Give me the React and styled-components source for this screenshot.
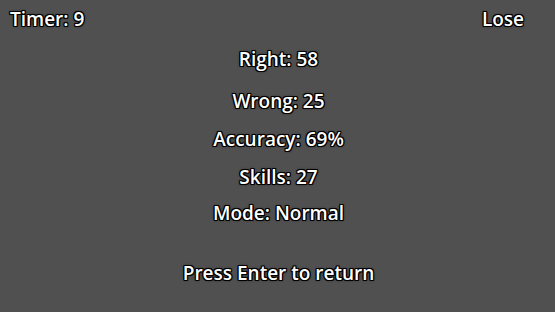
import React from "react";
import styled, { createGlobalStyle } from "styled-components";

const Global = createGlobalStyle`
  html, body {
    margin: 0;
    padding: 0;
    background: #505050;
  }
`;

const Screen = styled.div`
  width: 555px;
  height: 312px;
  background: #505050;
  color: #fff;
  font-family: "Open Sans", "DejaVu Sans", sans-serif;
  font-size: 19px;
  font-weight: 600;
  text-shadow: -1px -1px 0 #000, 1px -1px 0 #000, -1px 1px 0 #000,
    1px 1px 0 #000, 0 -1px 0 #000, 0 1px 0 #000, -1px 0 0 #000, 1px 0 0 #000,
    0 0 3px #000;
  overflow: hidden;
  display: flex;
  flex-direction: column;
`;

const TopBar = styled.div`
  display: flex;
  justify-content: space-between;
  padding: 6px 31px 0 10px;
  line-height: 26px;
`;

const Stats = styled.div`
  display: flex;
  flex-direction: column;
  align-items: center;
  margin-top: 14px;
  padding-left: 2px;
`;

const Line = styled.div`
  line-height: 26px;
  margin-top: ${({ gap }) => gap}px;
`;

const stats = [
  ["Right: 58", 0],
  ["Wrong: 25", 16],
  ["Accuracy: 69%", 12],
  ["Skills: 27", 12],
  ["Mode: Normal", 10],
  ["Press Enter to return", 34],
];

export default function App() {
  return (
    <>
      <Global />
      <Screen>
        <TopBar>
          <span>Timer: 9</span>
          <span>Lose</span>
        </TopBar>
        <Stats>
          {stats.map(([text, gap]) => (
            <Line key={text} gap={gap}>
              {text}
            </Line>
          ))}
        </Stats>
      </Screen>
    </>
  );
}
